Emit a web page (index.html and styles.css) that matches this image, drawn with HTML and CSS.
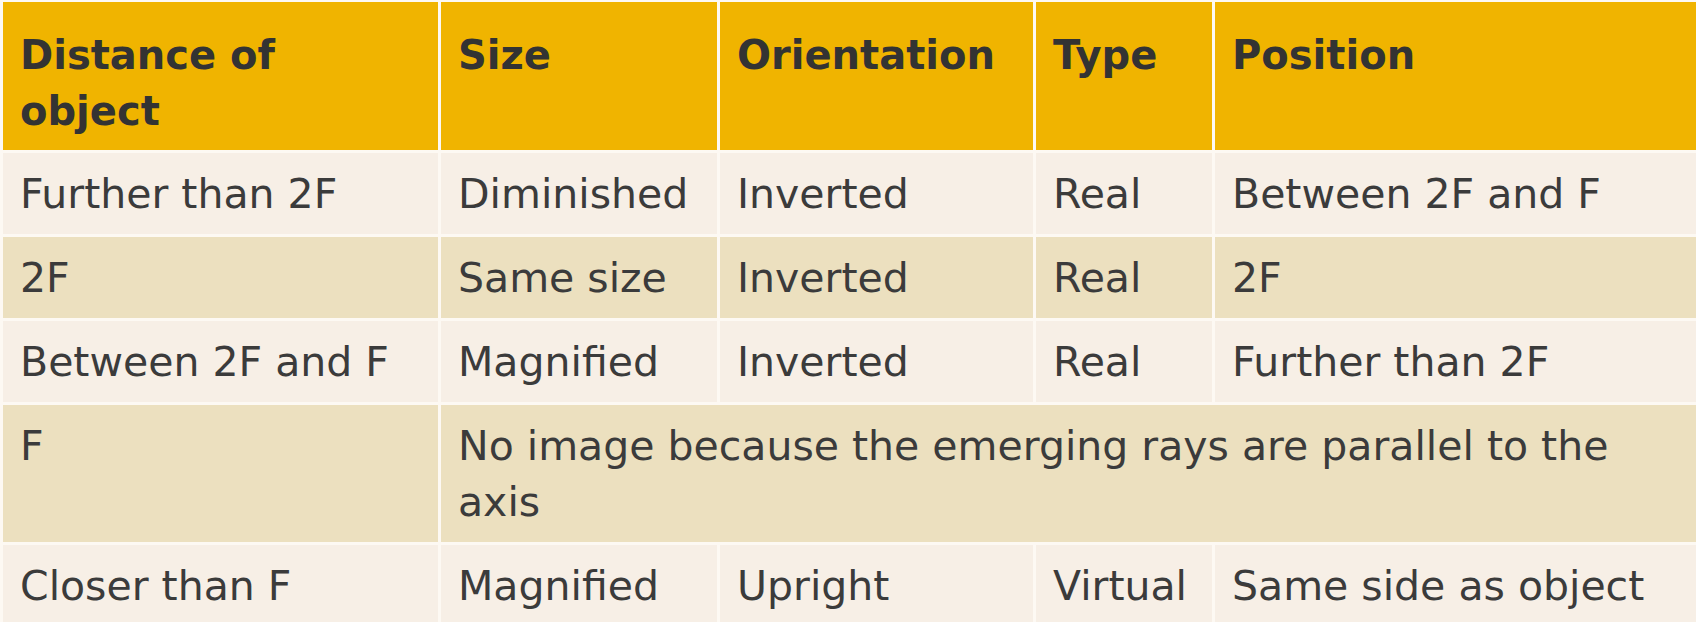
FILE: index.html
```html
<!DOCTYPE html>
<html lang="en">
<head>
<meta charset="utf-8">
<title>Convex lens images</title>
<link rel="stylesheet" href="styles.css">
</head>
<body>
<table class="lens-table">
  <colgroup>
    <col class="c-dist">
    <col class="c-size">
    <col class="c-orient">
    <col class="c-type">
    <col class="c-pos">
  </colgroup>
  <thead>
    <tr>
      <th>Distance of object</th>
      <th>Size</th>
      <th>Orientation</th>
      <th>Type</th>
      <th>Position</th>
    </tr>
  </thead>
  <tbody>
    <tr class="odd">
      <td>Further than 2F</td>
      <td>Diminished</td>
      <td>Inverted</td>
      <td>Real</td>
      <td>Between 2F and F</td>
    </tr>
    <tr class="even">
      <td>2F</td>
      <td>Same size</td>
      <td>Inverted</td>
      <td>Real</td>
      <td>2F</td>
    </tr>
    <tr class="odd">
      <td>Between 2F and F</td>
      <td>Magnified</td>
      <td>Inverted</td>
      <td>Real</td>
      <td>Further than 2F</td>
    </tr>
    <tr class="even">
      <td>F</td>
      <td colspan="4">No image because the emerging rays are parallel to the axis</td>
    </tr>
    <tr class="odd">
      <td>Closer than F</td>
      <td>Magnified</td>
      <td>Upright</td>
      <td>Virtual</td>
      <td>Same side as object</td>
    </tr>
  </tbody>
</table>
</body>
</html>
```

FILE: styles.css
```css
html, body {
  margin: 0;
  padding: 0;
  overflow: hidden;
  background: #fdf9f3;
}

.lens-table {
  border-collapse: separate;
  border-spacing: 3px;
  margin: -1px 0 0 0;
  width: 1702px;
  table-layout: fixed;
  font-family: "DejaVu Sans", Verdana, sans-serif;
  font-size: 41px;
  line-height: 56px;
  color: #3b3b3b;
  background: #fdf9f3;
}

.c-dist { width: 435px; }
.c-size { width: 276px; }
.c-orient { width: 313px; }
.c-type { width: 176px; }

.lens-table th,
.lens-table td {
  text-align: left;
  vertical-align: top;
  padding: 13px 17px 12px 17px;
}

.lens-table th {
  background: #f0b400;
  color: #333333;
  font-weight: bold;
  font-size: 40px;
  padding-top: 25px;
  padding-bottom: 11px;
}

.lens-table tr.odd td {
  background: #f7efe6;
}

.lens-table tr.even td {
  background: #ece0bf;
}
```
